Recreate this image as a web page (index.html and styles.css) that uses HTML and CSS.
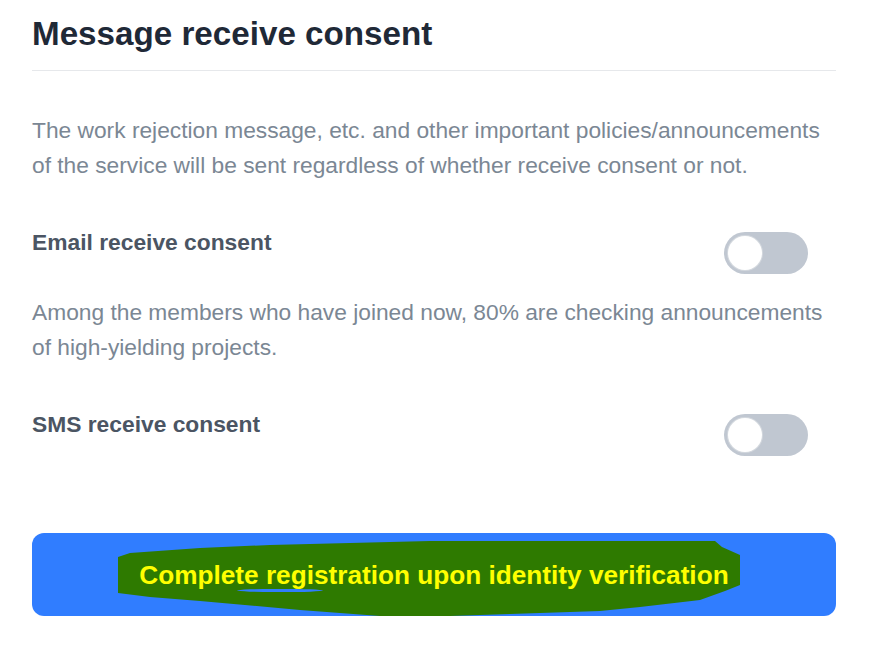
FILE: index.html
```html
<!DOCTYPE html>
<html>
<head>
<meta charset="utf-8">
<link rel="stylesheet" href="styles.css">
</head>
<body>
<section class="consent">
  <h1 class="title">Message receive consent</h1>
  <p class="desc first">The work rejection message, etc. and other important policies/announcements of the service will be sent regardless of whether receive consent or not.</p>
  <div class="row">
    <span class="label">Email receive consent</span>
    <span class="toggle"><span class="knob"></span></span>
  </div>
  <p class="desc">Among the members who have joined now, 80% are checking announcements of high-yielding projects.</p>
  <div class="row">
    <span class="label">SMS receive consent</span>
    <span class="toggle"><span class="knob"></span></span>
  </div>
  <div class="btn-wrap">
    <button class="submit">
      <svg class="marker" width="804" height="83" viewBox="0 0 804 83">
        <polygon fill="#2e7a00" points="86,24 98,20 168,15 238,12 398,8 683,8 690,14 708,22 708,52 693,58 668,67 608,74 568,78 478,81 418,83 348,83 268,77 168,68 118,64 86,60"/>
        <ellipse cx="248" cy="57.5" rx="43" ry="1.6" fill="#307dff"/>
      </svg>
      <span class="submit-text">Complete registration upon identity verification</span>
    </button>
    <span class="yellow-slip"></span>
  </div>
</section>
</body>
</html>
```
FILE: styles.css
```css
html, body {
  margin: 0;
  padding: 0;
  background: #ffffff;
}
body {
  font-family: "Liberation Sans", Arial, sans-serif;
}
.consent {
  width: 804px;
  margin-left: 32px;
  padding-top: 14px;
}
.title {
  margin: 0;
  font-size: 33.2px;
  line-height: 40px;
  font-weight: 700;
  color: #1f2937;
  padding-bottom: 16px;
  border-bottom: 1px solid #e6e8eb;
}
.desc {
  margin: 0;
  font-size: 22.75px;
  line-height: 35px;
  color: #7b8794;
  padding-top: 20.5px;
}
.desc.first {
  padding-top: 41.5px;
}
.row {
  display: flex;
  justify-content: space-between;
  align-items: flex-start;
  padding-top: 45.5px;
}
.label {
  font-size: 22.8px;
  line-height: 28px;
  font-weight: 700;
  color: #4b5563;
}
.toggle {
  display: flex;
  align-items: center;
  box-sizing: border-box;
  width: 84px;
  height: 42px;
  margin-top: 4px;
  margin-right: 28px;
  padding-left: 4px;
  border-radius: 21px;
  background: #c0c7d1;
}
.knob {
  width: 34px;
  height: 34px;
  border-radius: 50%;
  background: #ffffff;
  box-shadow: 0 0 0 1px #d3d8de;
}
.btn-wrap {
  position: relative;
  padding-top: 77px;
}
.submit {
  position: relative;
  display: flex;
  align-items: center;
  justify-content: center;
  width: 804px;
  height: 83px;
  margin: 0;
  padding: 0;
  border: none;
  border-radius: 12px;
  background: #307dff;
  font-family: "Liberation Sans", Arial, sans-serif;
  overflow: hidden;
}
.marker {
  position: absolute;
  left: 0;
  top: 0;
}
.submit-text {
  position: relative;
  font-size: 26.2px;
  font-weight: 700;
  color: #ffff00;
  margin-top: 2px;
}
.yellow-slip {
  position: absolute;
  left: 373px;
  bottom: -3px;
  width: 62px;
  height: 3px;
  background: #ffff00;
}
```
